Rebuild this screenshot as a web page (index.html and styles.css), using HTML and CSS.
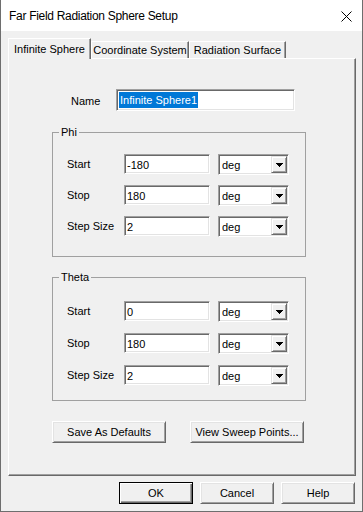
FILE: index.html
```html
<!DOCTYPE html>
<html lang="en">
<head>
    <meta charset="UTF-8">
    <title>Far Field Radiation Sphere Setup</title>
    <link rel="stylesheet" href="styles.css">
</head>
<body>
    <div class="window">
        <div class="titlebar">
            <span class="title">Far Field Radiation Sphere Setup</span>
            <svg class="close" width="11" height="11" viewBox="0 0 11 11">
                <path d="M0.5 0.5L10.5 10.5M10.5 0.5L0.5 10.5" stroke="#000" stroke-width="1"/>
            </svg>
        </div>

        <div class="content">
            <div class="tabs">
                <div class="tab active">Infinite Sphere</div>
                <div class="tab tab-coord">Coordinate System</div>
                <div class="tab tab-rad">Radiation Surface</div>
            </div>

            <div class="panel">
                <div class="name-row">
                    <label>Name</label>
                    <div class="field name-field"><span class="selected">Infinite Sphere1</span></div>
                </div>

                <fieldset class="group">
                    <legend>Phi</legend>
                    <div class="rows">
                        <div class="row">
                            <label>Start</label>
                            <div class="field num">-180</div>
                            <div class="combo"><span>deg</span><div class="drop"><svg width="7" height="4" viewBox="0 0 7 4" shape-rendering="crispEdges"><path d="M0 0h7v1H0zM1 1h5v1H1zM2 2h3v1H2zM3 3h1v1H3z" fill="#000"/></svg></div></div>
                        </div>
                        <div class="row">
                            <label>Stop</label>
                            <div class="field num">180</div>
                            <div class="combo"><span>deg</span><div class="drop"><svg width="7" height="4" viewBox="0 0 7 4" shape-rendering="crispEdges"><path d="M0 0h7v1H0zM1 1h5v1H1zM2 2h3v1H2zM3 3h1v1H3z" fill="#000"/></svg></div></div>
                        </div>
                        <div class="row">
                            <label>Step Size</label>
                            <div class="field num">2</div>
                            <div class="combo"><span>deg</span><div class="drop"><svg width="7" height="4" viewBox="0 0 7 4" shape-rendering="crispEdges"><path d="M0 0h7v1H0zM1 1h5v1H1zM2 2h3v1H2zM3 3h1v1H3z" fill="#000"/></svg></div></div>
                        </div>
                    </div>
                </fieldset>

                <fieldset class="group theta">
                    <legend>Theta</legend>
                    <div class="rows">
                        <div class="row">
                            <label>Start</label>
                            <div class="field num">0</div>
                            <div class="combo"><span>deg</span><div class="drop"><svg width="7" height="4" viewBox="0 0 7 4" shape-rendering="crispEdges"><path d="M0 0h7v1H0zM1 1h5v1H1zM2 2h3v1H2zM3 3h1v1H3z" fill="#000"/></svg></div></div>
                        </div>
                        <div class="row">
                            <label>Stop</label>
                            <div class="field num">180</div>
                            <div class="combo"><span>deg</span><div class="drop"><svg width="7" height="4" viewBox="0 0 7 4" shape-rendering="crispEdges"><path d="M0 0h7v1H0zM1 1h5v1H1zM2 2h3v1H2zM3 3h1v1H3z" fill="#000"/></svg></div></div>
                        </div>
                        <div class="row">
                            <label>Step Size</label>
                            <div class="field num">2</div>
                            <div class="combo"><span>deg</span><div class="drop"><svg width="7" height="4" viewBox="0 0 7 4" shape-rendering="crispEdges"><path d="M0 0h7v1H0zM1 1h5v1H1zM2 2h3v1H2zM3 3h1v1H3z" fill="#000"/></svg></div></div>
                        </div>
                    </div>
                </fieldset>

                <div class="panel-buttons">
                    <div class="btn wide">Save As Defaults</div>
                    <div class="btn wide">View Sweep Points...</div>
                </div>
            </div>

            <div class="dialog-buttons">
                <div class="btn default">OK</div>
                <div class="btn">Cancel</div>
                <div class="btn">Help</div>
            </div>
        </div>
    </div>
</body>
</html>
```

FILE: styles.css
```css
body {
    margin: 0;
    padding: 0;
    font-family: 'Liberation Sans', Arial, sans-serif;
    font-size: 11px;
    color: #000;
    background: #f0f0f0;
}
.window {
    width: 363px;
    height: 512px;
    box-sizing: border-box;
    border: 1px solid #6e6e6e;
    border-top: none;
    background: #f0f0f0;
    display: flex;
    flex-direction: column;
}
.titlebar {
    height: 31px;
    background: #fff;
    display: flex;
    align-items: center;
    justify-content: space-between;
    padding: 0 10px 0 8px;
}
.title {
    font-size: 12px;
    letter-spacing: -0.3px;
    padding-top: 1px;
}
.close {
    display: block;
    margin-top: 1px;
}
.content {
    padding: 7px 6px 0 7px;
}

/* tabs */
.tabs {
    display: flex;
    align-items: flex-end;
    height: 20px;
}
.tab {
    box-sizing: border-box;
    height: 17px;
    display: flex;
    align-items: center;
    justify-content: center;
    border-top: 1px solid #fff;
    border-left: 1px solid #fff;
    border-right: 1px solid #696969;
    box-shadow: inset -1px 0 0 #a0a0a0;
    background: #f0f0f0;
}
.tab.active {
    width: 83px;
    height: 21px;
    margin-bottom: -1px;
    position: relative;
    z-index: 1;
    padding-bottom: 1px;
}
.tab-coord {
    width: 98px;
}
.tab-rad {
    width: 97px;
}

/* panel */
.panel {
    box-sizing: border-box;
    width: 348px;
    height: 418px;
    border-top: 1px solid #fff;
    border-left: 1px solid #fff;
    border-right: 1px solid #696969;
    border-bottom: 1px solid #696969;
    box-shadow: inset -1px -1px 0 #a0a0a0;
}
.name-row {
    display: flex;
    align-items: center;
    margin-top: 30px;
    padding-left: 62px;
}
.name-row label {
    width: 45px;
    padding-top: 1px;
}
.field {
    box-sizing: border-box;
    background: #fff;
    border-top: 1px solid #a0a0a0;
    border-left: 1px solid #a0a0a0;
    border-right: 1px solid #fff;
    border-bottom: 1px solid #fff;
    box-shadow: inset 1px 1px 0 #696969, inset -1px -1px 0 #e3e3e3;
    display: flex;
    align-items: center;
}
.name-field {
    width: 179px;
    height: 22px;
    padding-left: 2px;
}
.selected {
    background: #0078d7;
    color: #fff;
    line-height: 16px;
    padding: 0 1px;
}

/* group boxes */
.group {
    box-sizing: border-box;
    width: 254px;
    margin: 15px 0 0 43px;
    padding: 0;
    border: 1px solid #a0a0a0;
}
.group legend {
    line-height: 13px;
    padding: 0 2px;
    margin-left: 6px;
}
.rows {
    display: flex;
    flex-direction: column;
    gap: 10px;
    padding: 15px 0 19px 14px;
}
.theta {
    margin-top: 14px;
}
.theta .rows {
    gap: 11px;
    padding-top: 17px;
    padding-bottom: 14px;
}
.row {
    display: flex;
    align-items: flex-start;
    height: 21px;
}
.row label {
    width: 57px;
    line-height: 20px;
}
.num {
    width: 86px;
    height: 20px;
    padding-left: 2px;
    padding-top: 1px;
}
.combo {
    box-sizing: border-box;
    width: 71px;
    height: 21px;
    margin-left: 8px;
    background: #fff;
    border-top: 1px solid #a0a0a0;
    border-left: 1px solid #a0a0a0;
    border-right: 1px solid #fff;
    border-bottom: 1px solid #fff;
    box-shadow: inset 1px 1px 0 #696969, inset -1px -1px 0 #e3e3e3;
    display: flex;
    align-items: center;
    justify-content: space-between;
    padding: 1px;
}
.combo span {
    padding-left: 2px;
    padding-top: 1px;
}
.drop {
    box-sizing: border-box;
    width: 16px;
    height: 17px;
    background: #f0f0f0;
    border-top: 1px solid #e3e3e3;
    border-left: 1px solid #e3e3e3;
    border-right: 1px solid #696969;
    border-bottom: 1px solid #696969;
    box-shadow: inset 1px 1px 0 #fff, inset -1px -1px 0 #a0a0a0;
    display: flex;
    align-items: center;
    justify-content: center;
}
.drop svg {
    display: block;
}

/* buttons */
.btn {
    box-sizing: border-box;
    width: 74px;
    height: 22px;
    display: flex;
    align-items: center;
    justify-content: center;
    background: #f0f0f0;
    border-top: 1px solid #fff;
    border-left: 1px solid #fff;
    border-right: 1px solid #696969;
    border-bottom: 1px solid #696969;
    box-shadow: inset 1px 1px 0 #e3e3e3, inset -1px -1px 0 #a0a0a0;
}
.btn.wide {
    width: 114px;
}
.btn.default {
    border: 1px solid #000;
    box-shadow: inset 1px 1px 0 #fff, inset -1px -1px 0 #696969, inset -2px -2px 0 #a0a0a0;
}
.panel-buttons {
    display: flex;
    gap: 24px;
    margin: 20px 0 0 43px;
}
.dialog-buttons {
    display: flex;
    justify-content: flex-end;
    gap: 7px;
    margin-top: 6px;
    padding-right: 1px;
}
```
